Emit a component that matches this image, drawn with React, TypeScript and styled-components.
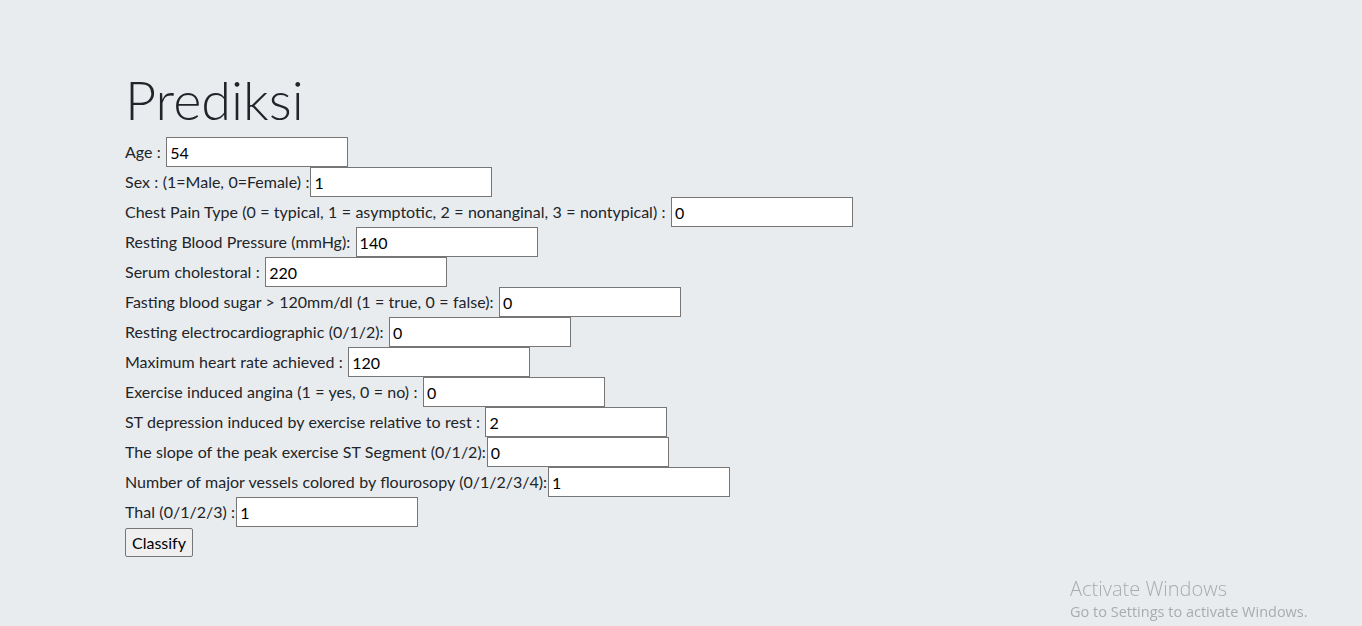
import React from 'react';
import styled, { createGlobalStyle } from 'styled-components';

const GlobalStyle = createGlobalStyle`
  html, body {
    margin: 0;
    padding: 0;
    background: #e9ecef;
  }
  body {
    font-family: "Lato", "Open Sans", sans-serif;
    font-size: 16px;
    color: #212529;
  }
`;

const Jumbotron = styled.div`
  min-height: 626px;
  box-sizing: border-box;
  padding: 64px 0 0;
  background: #e9ecef;
`;

const Container = styled.div`
  width: 1140px;
  margin: 0 auto;
  padding: 0 15px 0 14px;
  box-sizing: border-box;
`;

const Title = styled.h1`
  margin: 0 0 2px;
  font-size: 54px;
  font-weight: 300;
  line-height: 71px;
  color: #212529;
`;

const Row = styled.div`
  display: flex;
  align-items: center;
  height: 30px;
  white-space: pre;
  word-spacing: 0.3px;
`;

const Label = styled.label`
  line-height: 30px;
`;

const Field = styled.input`
  box-sizing: border-box;
  width: 182px;
  height: 30px;
  margin: 0 0 0 1px;
  padding: 0 3px;
  border: 1px solid #767676;
  border-radius: 0;
  background: #fff;
  font: inherit;
  color: #000;
  outline: none;
`;

const Button = styled.button`
  margin-top: 1px;
  height: 29px;
  padding: 0 6px;
  border: 1px solid #767676;
  border-radius: 2px;
  background: #efefef;
  font: inherit;
  color: #000;
`;

const Watermark = styled.div`
  position: fixed;
  left: 1070px;
  top: 577px;
  color: #a9acaf;
  font-family: "Open Sans", sans-serif;
  line-height: 1.2;
`;

const WmTitle = styled.div`
  font-size: 20px;
  font-weight: 300;
`;

const WmText = styled.div`
  font-size: 14.5px;
  margin-top: 2px;
`;

const fields: [string, string][] = [
  ['Age : ', '54'],
  ['Sex : (1=Male, 0=Female) :', '1'],
  ['Chest Pain Type (0 = typical, 1 = asymptotic, 2 = nonanginal, 3 = nontypical) : ', '0'],
  ['Resting Blood Pressure (mmHg): ', '140'],
  ['Serum cholestoral : ', '220'],
  ['Fasting blood sugar > 120mm/dl (1 = true, 0 = false): ', '0'],
  ['Resting electrocardiographic (0/1/2): ', '0'],
  ['Maximum heart rate achieved : ', '120'],
  ['Exercise induced angina (1 = yes, 0 = no) : ', '0'],
  ['ST depression induced by exercise relative to rest : ', '2'],
  ['The slope of the peak exercise ST Segment (0/1/2):', '0'],
  ['Number of major vessels colored by flourosopy (0/1/2/3/4):', '1'],
  ['Thal (0/1/2/3) :', '1'],
];

export default function App() {
  return (
    <>
      <GlobalStyle />
      <Jumbotron>
        <Container>
          <Title>Prediksi</Title>
          <form onSubmit={(e) => e.preventDefault()}>
            {fields.map(([label, value]) => (
              <Row key={label}>
                <Label>{label}</Label>
                <Field type="text" defaultValue={value} />
              </Row>
            ))}
            <Button type="submit">Classify</Button>
          </form>
        </Container>
      </Jumbotron>
      <Watermark>
        <WmTitle>Activate Windows</WmTitle>
        <WmText>Go to Settings to activate Windows.</WmText>
      </Watermark>
    </>
  );
}
